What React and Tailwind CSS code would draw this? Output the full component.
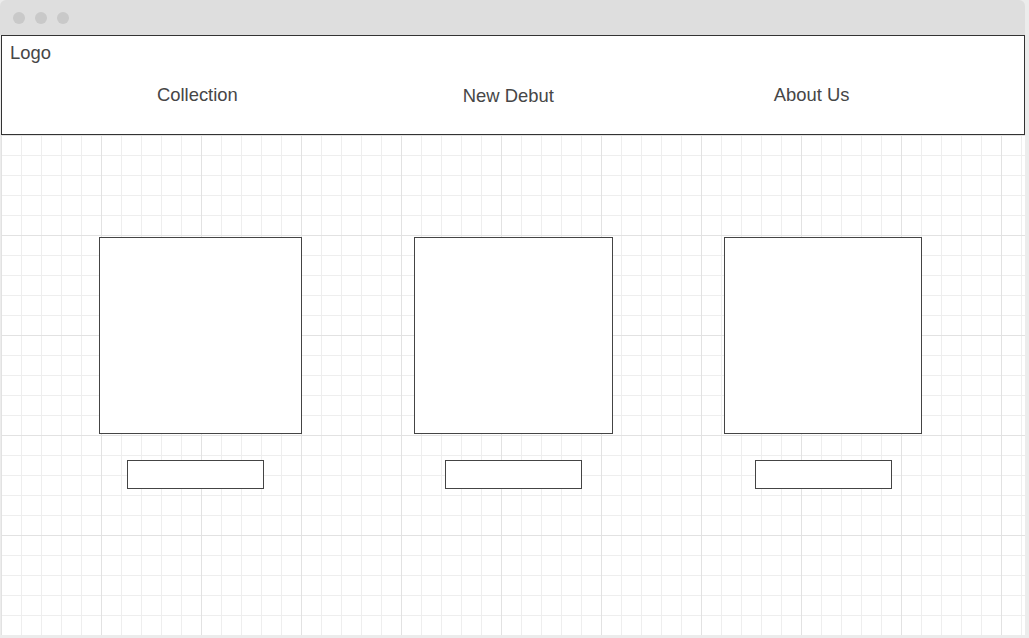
import React from "react";

const cols = [
  { ml: "ml-[98px]", w: "w-[203px]", btn: "ml-[28px]" },
  { ml: "ml-[112px]", w: "w-[199px]", btn: "ml-[31px]" },
  { ml: "ml-[111px]", w: "w-[198px]", btn: "ml-[31px]" },
];

function Card({ col }) {
  return (
    <div className={`flex flex-col ${col.ml}`}>
      <div className={`h-[197px] ${col.w} border border-[#444] bg-white`} />
      <div className={`mt-[26px] h-[29px] w-[137px] border border-[#444] bg-white ${col.btn}`} />
    </div>
  );
}

export default function App() {
  return (
    <div
      className="w-[1029px] h-[638px] bg-[#ececec] overflow-hidden text-[#464646]"
      style={{ fontFamily: '"Liberation Sans", Arial, sans-serif' }}
    >
      <div className="w-[1025px] h-[635px] flex flex-col">
        {/* window title bar */}
        <div className="h-[35px] bg-[#dedede] rounded-t-[6px] flex items-center gap-[10px] pl-[13px]">
          <span className="w-[12px] h-[12px] rounded-full bg-[#c9c9c9]" />
          <span className="w-[12px] h-[12px] rounded-full bg-[#c9c9c9]" />
          <span className="w-[12px] h-[12px] rounded-full bg-[#c9c9c9]" />
        </div>

        <div className="ml-[1px] flex-1 flex flex-col bg-white">
          <header className="h-[100px] border border-[#333] bg-white flex flex-col pl-[8px] pt-[7px]">
            <div className="text-[18.4px] leading-[20px]">Logo</div>
            <nav className="flex mt-[22px] text-[18.4px] leading-[20px]">
              <a className="ml-[147px]">Collection</a>
              <a className="ml-[225px] mt-[1px]">New Debut</a>
              <a className="ml-[220px]">About Us</a>
            </nav>
          </header>

          <main className="flex-1 pt-[102px] bg-white bg-[image:linear-gradient(to_right,#e2e2e2_1px,transparent_1px),linear-gradient(to_bottom,#e2e2e2_1px,transparent_1px),linear-gradient(to_right,#eeeeee_1px,transparent_1px),linear-gradient(to_bottom,#eeeeee_1px,transparent_1px)] bg-[size:100px_100px,100px_100px,20px_20px,20px_20px]">
            <div className="flex items-start">
              {cols.map((c, i) => (
                <Card key={i} col={c} />
              ))}
            </div>
          </main>
        </div>
      </div>
    </div>
  );
}
